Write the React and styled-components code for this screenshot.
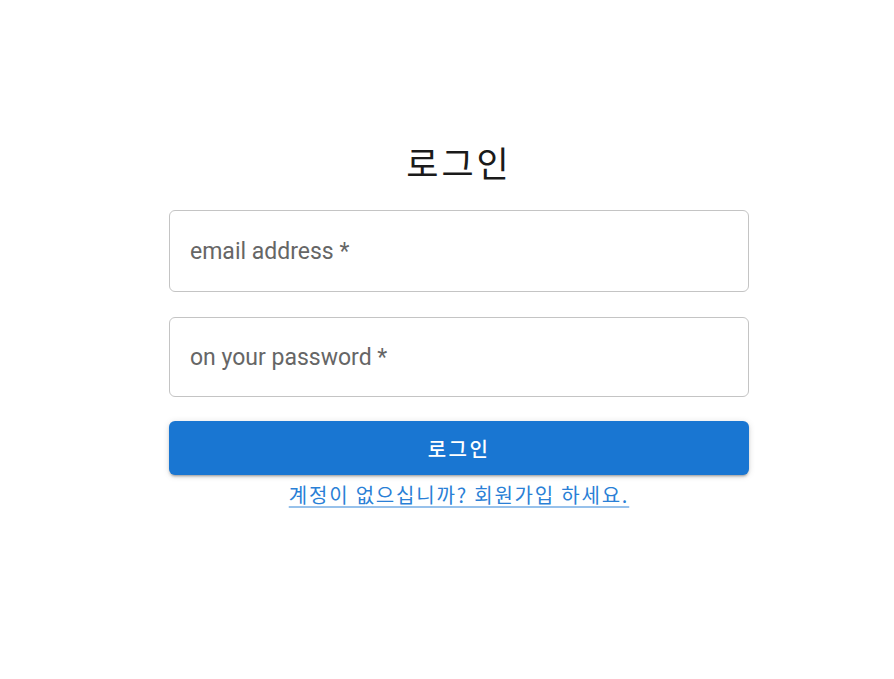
import React from "react";
import styled, { createGlobalStyle } from "styled-components";

const GlobalStyle = createGlobalStyle`
  body {
    margin: 0;
    background: #fff;
    font-family: Roboto, "Noto Sans CJK KR", sans-serif;
  }
`;

const Page = styled.div`
  width: 894px;
  height: 679px;
  box-sizing: border-box;
  padding-top: 138px;
`;

const Form = styled.form`
  width: 580px;
  margin-left: 169px;
  display: flex;
  flex-direction: column;
  align-items: stretch;
`;

const Title = styled.h1`
  margin: 0 0 24px;
  text-align: center;
  font-family: "Noto Sans CJK KR", sans-serif;
  font-weight: 400;
  font-size: 35px;
  letter-spacing: 3px;
  line-height: 48px;
  color: #1a1a1a;
`;

const Field = styled.div`
  height: ${(p) => p.$h}px;
  box-sizing: border-box;
  border: 1px solid #c4c4c4;
  border-radius: 6px;
  display: flex;
  align-items: center;
  padding: 0 20px;
  margin-bottom: ${(p) => p.$mb}px;
`;

const Placeholder = styled.span`
  font-family: Roboto, sans-serif;
  font-size: 23px;
  color: #666;
`;

const Button = styled.button`
  height: 54px;
  border: none;
  border-radius: 6px;
  background: #1976d2;
  color: #fff;
  font-family: "Noto Sans CJK KR", sans-serif;
  font-size: 20px;
  font-weight: 500;
  letter-spacing: 2.5px;
  box-shadow: 0 3px 2px -2px rgba(0, 0, 0, 0.2), 0 2px 3px 0 rgba(0, 0, 0, 0.14),
    0 1px 7px 0 rgba(0, 0, 0, 0.12);
  cursor: pointer;
`;

const SignUp = styled.a`
  margin-top: 6px;
  align-self: center;
  font-family: "Noto Sans CJK KR", sans-serif;
  font-size: 20px;
  letter-spacing: 1.8px;
  line-height: 28px;
  color: #2a7fd6;
  text-decoration: underline;
  text-decoration-color: rgba(25, 118, 210, 0.45);
  text-underline-offset: 3px;
  cursor: pointer;
`;

export default function App() {
  return (
    <Page>
      <GlobalStyle />
      <Form onSubmit={(e) => e.preventDefault()}>
        <Title>로그인</Title>
        <Field $h={82} $mb={25}>
          <Placeholder>email address *</Placeholder>
        </Field>
        <Field $h={80} $mb={24}>
          <Placeholder>on your password *</Placeholder>
        </Field>
        <Button type="submit">로그인</Button>
        <SignUp>계정이 없으십니까? 회원가입 하세요.</SignUp>
      </Form>
    </Page>
  );
}
